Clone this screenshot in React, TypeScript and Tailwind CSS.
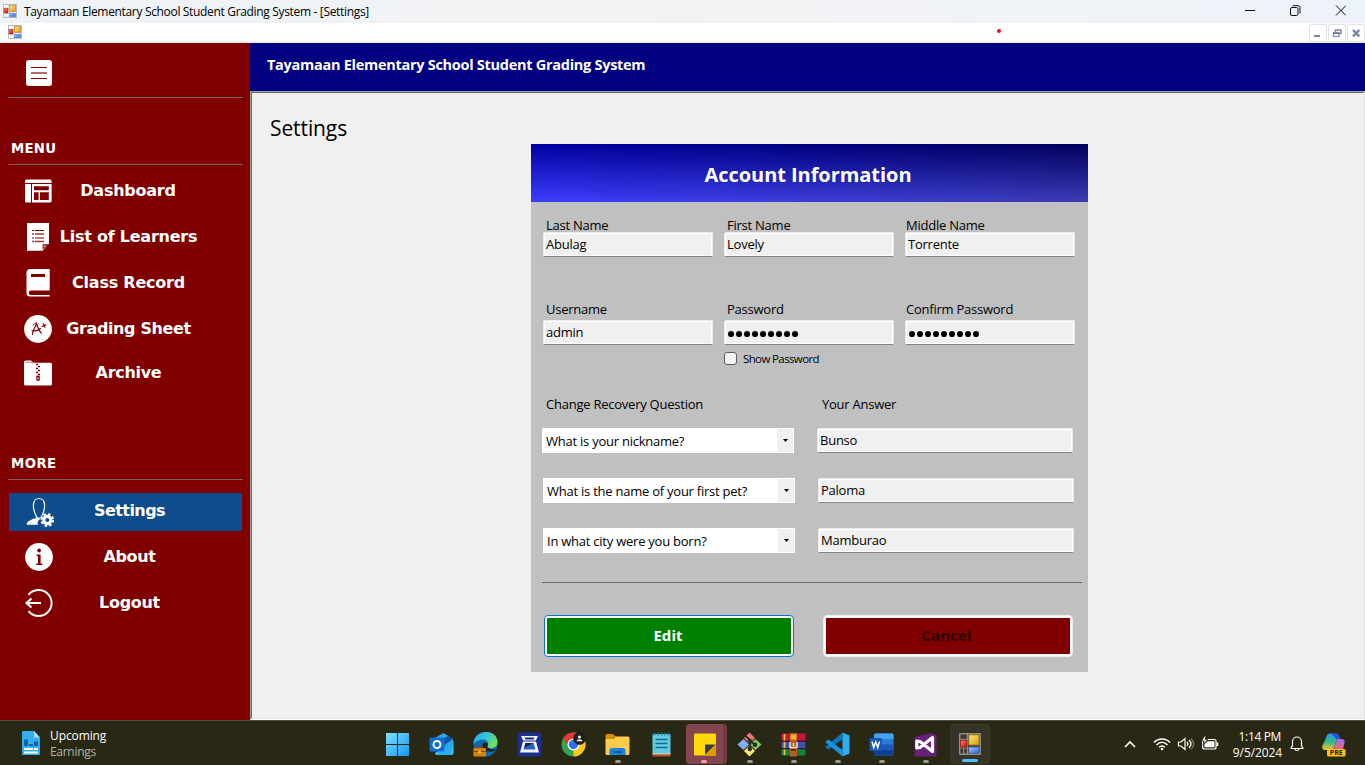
import React from "react";

const SANS = "font-['Open_Sans','Noto_Sans',sans-serif]";
const WIDE = "font-['DejaVu_Sans',sans-serif]";

function FormsIcon({ size = 14, dark = false }: { size?: number; dark?: boolean }) {
  return (
    <svg width={size} height={size} viewBox="0 0 14 14" className="block shrink-0">
      <defs>
        <linearGradient id="fy" x1="0" y1="0" x2="1" y2="1">
          <stop offset="0" stopColor="#ffe98a" />
          <stop offset="1" stopColor="#d99a00" />
        </linearGradient>
        <linearGradient id="fb" x1="0" y1="0" x2="1" y2="1">
          <stop offset="0" stopColor="#a9c8ff" />
          <stop offset="1" stopColor="#2f62cf" />
        </linearGradient>
        <linearGradient id="fr" x1="0" y1="0" x2="1" y2="1">
          <stop offset="0" stopColor="#ff8a7a" />
          <stop offset="1" stopColor="#b80c0c" />
        </linearGradient>
      </defs>
      <rect x="0.5" y="0.5" width="13" height="13" fill={dark ? "#3a3a30" : "#fff"} stroke={dark ? "#aaa69c" : "#b9b9b9"} strokeWidth={dark ? 0.7 : 1} />
      <path d="M5.3 0V14M0 9.5H5.3M3 9.5V14M0 4H5.3" stroke={dark ? "#aaa69c" : "#c4c4c4"} strokeWidth="0.6" />
      <rect x="6.300" y="1.2" width="6.4" height="6.4" fill="url(#fy)" stroke="#b58a1c" strokeWidth="0.6" />
      <rect x="1" y="4.6" width="4" height="4.4" fill="url(#fr)" stroke="#9d1c12" strokeWidth="0.5" />
      <rect x="6.300" y="9" width="6.4" height="3.8" fill="url(#fb)" stroke="#4d74c4" strokeWidth="0.4" />
    </svg>
  );
}

function TitleBar() {
  return (
    <div className="flex h-[23px] items-start bg-linear-to-r from-[#eef3f7] via-[#f2f2f3] to-[#edf3fa] pl-[3px]">
      <div className="pt-1">
        <FormsIcon />
      </div>
      <span className="ml-[7px] pt-[2px] text-[12px] leading-[20px] tracking-[-0.33px] text-black">
        Tayamaan Elementary School Student Grading System - [Settings]
      </span>
      <svg className="mt-[5px] mr-[19px] ml-auto block" width="101" height="11" viewBox="0 0 101 11" fill="none" stroke="#111" strokeWidth="1">
        <path d="M0 5.5H10" />
        <rect x="45.5" y="2.5" width="7.5" height="8" rx="1.5" />
        <path d="M47.5 0.7H53a2 2 0 0 1 2 2V8.5" />
        <path d="M91 0.5L101 10.5M101 0.5L91 10.5" />
      </svg>
    </div>
  );
}

function MdiButton({ children }: { children: React.ReactNode }) {
  return (
    <div className="flex h-[18px] w-[18px] items-center justify-center rounded-[2px] border border-[#e2e2e2] bg-white">
      <svg width="10" height="10" viewBox="0 0 10 10" fill="none" stroke="#76889b" className="block">
        {children}
      </svg>
    </div>
  );
}

function MenuBar() {
  return (
    <div className="flex h-5 items-start border-b-2 border-[#f0f0f0] bg-white pl-2">
      <div className="pt-[2px]">
        <FormsIcon />
      </div>
      <span className="mt-[6px] ml-[975px] h-1 w-1 rounded-full bg-[#ee1111]" />
      <div className="mt-px ml-auto flex gap-px">
        <MdiButton>
          <path d="M1 8H7" strokeWidth="2" />
        </MdiButton>
        <MdiButton>
          <path d="M3 2H9.500M9 2V6M3.500 2V4M7 5.500H9.500" strokeWidth="1.400" />
          <path d="M1 5H7.500" strokeWidth="2" />
          <path d="M1.500 5V8.500H7V5" strokeWidth="1.200" />
        </MdiButton>
        <MdiButton>
          <path d="M2 2L8.400 8.400M8.400 2L2 8.400" strokeWidth="2.400" />
        </MdiButton>
      </div>
    </div>
  );
}

const NAV_ICONS: Record<string, React.ReactNode> = {
  dashboard: (
    <>
      <path d="M1 6V5a1.600 1.600 0 0 1 1.600-1.600H26A1.600 1.600 0 0 1 27.600 5V7H1z" fill="#fff" />
      <path d="M1 8H7V26.500H2.600A1.600 1.600 0 0 1 1 24.900z" fill="#fff" />
      <path fillRule="evenodd" d="M8 8H27.600V24.900A1.600 1.600 0 0 1 26 26.500H8zM10 10.300V14.200H24.800V10.300zM10 16.300V24H14.600V16.300zM16 16.300V24H24.800V16.300z" fill="#fff" />
    </>
  ),
  learners: (
    <>
      <path d="M3 1H25V21.500L18.500 28.700H3z" fill="#fff" />
      <path d="M18.600 27.500V22.300H24.500z" fill="#800000" />
      <path d="M19.600 25.500V23.400H22z" fill="#fff" />
      <path d="M8 8.500H10M11 8.500H20M8 16H10M11 16H20" stroke="#800000" strokeWidth="1.100" />
      <path d="M8 12H10M11 12H20M8 19.500H10M11 19.500H20" stroke="#9c3a3a" strokeWidth="1.400" />
    </>
  ),
  record: (
    <>
      <path d="M6.500 1H25.700V22.600H7A2 2 0 0 0 7 27H25.700V28.500H6A3.500 3.500 0 0 1 2.500 25V5A4 4 0 0 1 6.500 1z" fill="#fff" />
      <rect x="7" y="6" width="14" height="3" fill="#800000" />
    </>
  ),
  grading: (
    <>
      <circle cx="14" cy="15" r="13.900" fill="#fff" />
      <path d="M8.500 20.500C8 18 11.500 12.500 12.500 9.500C13.500 12.500 15 17 17.300 19M8 16.500C10.500 17.300 14 16.500 16.500 14.500M18 12.500L22 10.800M19.300 9.700L21 13.200" fill="none" stroke="#800000" strokeWidth="1.200" strokeLinecap="round" />
      <path d="M9 11.500C9.500 9.700 11 9 12.700 9.500" fill="none" stroke="#800000" strokeWidth="1" />
    </>
  ),
  archive: (
    <>
      <path d="M0 4A1.600 1.600 0 0 1 1.600 2.400H7L9 4.700H26.400A1.600 1.600 0 0 1 28 6.300V26A1.600 1.600 0 0 1 26.400 27.600H1.600A1.600 1.600 0 0 1 0 26z" fill="#fff" />
      <path d="M1.500 4.300H7L8.500 5.400" stroke="#a85454" strokeWidth="0.800" fill="none" />
      <path d="M12 6.500H14M14 8.500H16M12 10.500H14M14 12.500H16M12 14.500H14M14 16.500H16" stroke="#800000" strokeWidth="1.500" />
      <rect x="12.300" y="17.500" width="3.500" height="5.300" rx="1.400" fill="#800000" />
      <path d="M13.200 20.300H15" stroke="#fff" strokeWidth="1" />
    </>
  ),
  settings: (
    <>
      <path d="M12.500 20C10.500 16 9 12 9.500 7.500C10 -0.500 20 -0.500 20.500 7.500C20.900 12 19.500 16 17.500 20" fill="none" stroke="#fff" strokeWidth="1.200" />
      <path d="M2.800 27.700C2.800 24.800 4.500 24.300 7 23C9.500 21.200 10.500 21.600 12 21.200L12.300 19L15 21L17.300 19L16 22C13.800 23.500 13 25.500 14 27.700z" fill="#fff" />
      <circle cx="23.300" cy="23" r="3.600" fill="none" stroke="#fff" strokeWidth="3.200" />
      <circle cx="23.300" cy="23" r="5.900" fill="none" stroke="#fff" strokeWidth="2" strokeDasharray="2.500 2.134" />
    </>
  ),
  about: (
    <>
      <circle cx="15" cy="15" r="13.900" fill="#fff" />
      <circle cx="15.100" cy="8.500" r="1.900" fill="#800000" />
      <path d="M12.500 12.500H16.600V21.500H18.300V22.900H12.300V21.500H14V13.900H12.500z" fill="#800000" />
    </>
  ),
  logout: (
    <>
      <path d="M4.500 6.800A13 13 0 1 1 4.500 23.200" fill="none" stroke="#fff" strokeWidth="2" />
      <path d="M2.500 15H17M7.500 10.500L2.500 15L7.500 19.500" fill="none" stroke="#fff" strokeWidth="2.200" />
    </>
  ),
};

function NavItem({ icon, label, active = false, className = "", text = "pb-px pl-[5px] tracking-[-0.24px]" }: { icon: string; label: string; active?: boolean; className?: string; text?: string }) {
  return (
    <button className={`ml-[9px] grid h-[38px] w-[233px] shrink-0 grid-cols-[15px_30px_1fr] items-center ${active ? "bg-[#0f4c8c]" : ""} ${className}`}>
      <svg width="30" height="30" viewBox="0 0 30 30" className="col-start-2 row-start-1 block">
        {NAV_ICONS[icon]}
      </svg>
      <span className={`col-span-3 col-start-1 row-start-1 text-center text-[16px] leading-5 font-bold whitespace-nowrap text-white ${text} ${WIDE}`}>{label}</span>
    </button>
  );
}

function SideLine() {
  return <div className="ml-2 h-px w-[235px] shrink-0 bg-[#7a6262]" />;
}

function Sidebar() {
  const heading = `pl-[11px] text-[13.3px] leading-5 font-bold tracking-[0.25px] text-white ${WIDE}`;
  return (
    <aside className="flex w-[250px] shrink-0 flex-col bg-[#800000] pt-[17px]">
      <svg width="26" height="26" viewBox="0 0 26 26" className="mb-[11px] ml-[26px] block shrink-0">
        <rect width="26" height="26" rx="3" fill="#fff" />
        <path d="M5 7.500H21M5 18.500H21" stroke="#800000" />
        <path d="M5 13H21" stroke="#b86a6a" strokeWidth="2" />
      </svg>
      <SideLine />
      <h2 className={`mt-[41px] mb-[5px] ${heading}`}>MENU</h2>
      <SideLine />
      <NavItem className="mt-[7px]" icon="dashboard" label="Dashboard" />
      <NavItem className="mt-2" icon="learners" label="List of Learners" text="pb-px pl-[6px] tracking-[-0.24px]" />
      <NavItem className="mt-2" icon="record" label="Class Record" text="pb-px pl-[6px] tracking-[-0.24px]" />
      <NavItem className="mt-2" icon="grading" label="Grading Sheet" text="pb-px pl-[6px] tracking-[-0.38px]" />
      <NavItem className="mt-[6px]" icon="archive" label="Archive" text="pb-px pl-[6px] tracking-[-0.3px]" />
      <h2 className={`mt-[62px] mb-[5px] ${heading} tracking-[0.45px]`}>MORE</h2>
      <SideLine />
      <NavItem className="mt-[13px]" icon="settings" label="Settings" active text="pb-[3px] pl-2 tracking-[-0.55px]" />
      <NavItem className="mt-[7px]" icon="about" label="About" text="pb-px pl-2 tracking-[-0.4px]" />
      <NavItem className="mt-2" icon="logout" label="Logout" text="pb-px pl-2 tracking-[-0.3px]" />
    </aside>
  );
}

const LABEL = "block text-[13px] leading-[14px] tracking-[-0.24px] text-black";

function Box({ children, className = "" }: { children: React.ReactNode; className?: string }) {
  return (
    <div className={`h-[25px] rounded-[2px] border border-[#ebebeb] border-b-[#858585] ${className}`}>
      <div className="h-[23px] border border-white bg-[#f0f0f0] pl-px text-[13px] leading-[21px] tracking-[-0.24px] text-black">{children}</div>
    </div>
  );
}

function Dots() {
  return (
    <svg width="73" height="21" viewBox="0 0 73 21" className="block">
      {Array.from({ length: 9 }, (_, i) => (
        <ellipse key={i} cx={4 + i * 8} cy="12" rx="3" ry="3.100" fill="#000" />
      ))}
    </svg>
  );
}

function Field({ label, pad = "pl-[3px]", tall = false, children }: { label: string; pad?: string; tall?: boolean; children: React.ReactNode }) {
  return (
    <label className="block w-[170px]">
      <span className={`${LABEL} ${pad} ${tall ? "mb-1" : ""}`}>{label}</span>
      <Box>{children}</Box>
    </label>
  );
}

function Combo({ children }: { children: React.ReactNode }) {
  return (
    <div className="flex h-[25px] w-[252px] justify-between bg-white p-px pl-1 text-[13px] tracking-[-0.24px] text-black">
      <span className="leading-[25px]">{children}</span>
      <span className="flex w-4 items-center justify-center bg-[#f0f0f0]">
        <svg width="5" height="3" viewBox="0 0 5 3" className="block">
          <path d="M0 0H5L2.500 3z" fill="#000" />
        </svg>
      </span>
    </div>
  );
}

function Account() {
  return (
    <section className="mt-[2px] ml-[279px] h-[528px] w-[557px] bg-[#c0c0c0]">
      <div className="grid h-[58px] bg-linear-to-r from-[#3d3dff] to-[#3c3cb6]">
        <div className="col-start-1 row-start-1 bg-linear-to-r from-[#0000a0] to-[#00005c] [mask-image:linear-gradient(to_bottom,black,transparent)]" />
        <h2 className="z-10 col-start-1 row-start-1 pt-[17px] pr-[3px] text-center text-[20px] leading-7 font-bold tracking-[-0.05px] text-white">Account Information</h2>
      </div>
      <div className="px-3">
        <div className="flex gap-[11px] pt-4">
          <Field label="Last Name">Abulag</Field>
          <Field label="First Name">Lovely</Field>
          <Field label="Middle Name" pad="pl-px">Torrente</Field>
        </div>
        <div className="flex gap-[11px] pt-[45px]">
          <Field label="Username" tall>admin</Field>
          <Field label="Password" tall><Dots /></Field>
          <Field label="Confirm Password" pad="pl-px" tall><Dots /></Field>
        </div>
        <div className="flex h-[52px] items-start pt-[7px] pl-[181px]">
          <span className="h-[13px] w-[13px] rounded-[3px] border border-[#5f5f5f] bg-[#f3f3f3]" />
          <span className="ml-[6px] text-[11.5px] leading-[14px] tracking-[-0.62px] text-black">Show Password</span>
        </div>
        <div className="flex pl-[3px]">
          <span className={`w-[276px] ${LABEL}`}>Change Recovery Question</span>
          <span className={LABEL}>Your Answer</span>
        </div>
        <div className="mt-[17px] -ml-px flex gap-[23px]">
          <Combo>What is your nickname?</Combo>
          <Box className="w-[256px]">Bunso</Box>
        </div>
        <div className="mt-[25px] flex gap-[23px]">
          <Combo>What is the name of your first pet?</Combo>
          <Box className="w-[256px]">Paloma</Box>
        </div>
        <div className="mt-[25px] flex gap-[23px]">
          <Combo>In what city were you born?</Combo>
          <Box className="w-[256px]">Mamburao</Box>
        </div>
        <div className="mt-[29px] -ml-px h-px w-[540px] bg-[#696969]" />
        <div className="mt-8 ml-px flex gap-[29px] text-[15px] font-bold tracking-[0.05px]">
          <button className="h-[42px] w-[250px] rounded-[4px] border border-[#0a72cc] bg-white p-[2px]">
            <span className="block h-[36px] bg-[#008000] pr-[2px] leading-[35px] text-white">Edit</span>
          </button>
          <button className="h-[42px] w-[250px] rounded-[4px] border border-[#ececec] bg-[#fdfdfd] p-[2px]">
            <span className="block h-[36px] bg-[#800000] pr-[3px] leading-[35px] tracking-[0.15px] text-[#2b0000]">Cancel</span>
          </button>
        </div>
      </div>
    </section>
  );
}

function AppArea() {
  return (
    <div className="flex min-w-0 flex-1 flex-col">
      <header className="h-12 bg-[#000080] pt-3 pl-[17px] text-[14.5px] leading-5 font-bold tracking-[-0.28px] text-white">
        Tayamaan Elementary School Student Grading System
      </header>
      <div className="flex-1 border border-t-[#a0a0a0] border-r-[#e3e3e3] border-b-white border-l-[#a0a0a0]">
        <main className="h-full border-t border-b border-l border-t-[#696969] border-b-[#e3e3e3] border-l-[#696969] bg-[#f0f0f0] pt-[21px]">
          <h1 className="pl-[18px] text-[21px] leading-7 tracking-[-0.1px] text-black">Settings</h1>
          <Account />
        </main>
      </div>
    </div>
  );
}

const APPS: { name: string; run?: boolean; art: React.ReactNode }[] = [
  {
    name: "Start",
    art: (
      <>
        <defs>
          <linearGradient id="win" x1="0" y1="0" x2="1" y2="1" gradientUnits="objectBoundingBox">
            <stop offset="0" stopColor="#7fe0ff" />
            <stop offset="1" stopColor="#1496ee" />
          </linearGradient>
        </defs>
        <path d="M1 1H12V12H1zM13 1H24V12H13zM1 13H12V24H1zM13 13H24V24H13z" fill="url(#win)" />
      </>
    ),
  },
  {
    name: "Outlook",
    art: (
      <>
        <path d="M4 7L14.500 1L24 7V10L14 16L4 11z" fill="#32a9e8" />
        <path d="M10 9L19 4L24 7L14 14z" fill="#124fa8" />
        <path d="M24.500 9V21a2 2 0 0 1-2 2H8a2 2 0 0 1-2-2L19 13z" fill="#3cc8f5" />
        <path d="M24.500 9L8 18L10 23H22z" fill="#1c9be8" opacity="0.600" />
        <rect x="0.500" y="5.500" width="15" height="14" rx="1.500" fill="#0f6fce" />
        <circle cx="8" cy="12.500" r="3.500" fill="none" stroke="#fff" strokeWidth="1.900" />
      </>
    ),
  },
  {
    name: "Edge",
    art: (
      <>
        <defs>
          <linearGradient id="edge" x1="0" y1="0" x2="1" y2="0.500">
            <stop offset="0" stopColor="#24a8e8" />
            <stop offset="0.500" stopColor="#2fc2df" />
            <stop offset="1" stopColor="#73e05a" />
          </linearGradient>
        </defs>
        <circle cx="12.500" cy="12.500" r="12" fill="#1268b4" />
        <path d="M0.500 12C1 -4 24.500 -3.500 24.500 10C24.500 16 18 17.500 14 15C16.500 12 15 7.500 10 7.500C5 7.500 2 10 0.500 12z" fill="url(#edge)" />
        <path d="M9 15C9 10.500 13 9.500 14.500 11.500C15.500 13 13.500 14.500 15 16C18 18.500 22 17.500 24.500 16.500C22 20 17 20.500 13 19z" fill="#22241c" />
        <rect x="0.500" y="16" width="12.500" height="8.500" rx="1" fill="#d9820f" />
        <path d="M4 16.500V14.800H9.500V16.500M0.500 19.500H13" stroke="#8a4608" fill="none" />
        <rect x="5.700" y="18.500" width="2" height="2.500" fill="#ffd45a" />
      </>
    ),
  },
  {
    name: "Scanner",
    art: (
      <>
        <rect x="0.500" y="0.500" width="24" height="24" rx="3" fill="#1c2f8f" />
        <path d="M4 4H21L18.800 8.500H6.200z" fill="#f4f6ff" />
        <path d="M7.500 5.500H17.500L16.500 7.500H8.500z" fill="#1d2a7c" />
        <path d="M6 9.500H19L22 20.500H3z" fill="#f4f6ff" />
        <path d="M8.500 11H16.500L18.500 17.500H6.500z" fill="#2864c8" />
        <path d="M8.500 11H16.500L7 16z" fill="#17225f" />
      </>
    ),
  },
  {
    name: "Chrome",
    art: (
      <>
        <circle cx="12.500" cy="12.500" r="12" fill="#34a450" />
        <path d="M12.500 12.500L22.900 6.500A12 12 0 0 1 12.500 24.500z" fill="#fbc719" />
        <path d="M2.100 6.500A12 12 0 0 1 22.900 6.500H12.500L7.500 14z" fill="#e23a2e" />
        <circle cx="12.500" cy="12.500" r="6" fill="#fff" />
        <circle cx="12.500" cy="12.500" r="4.700" fill="#2f6df0" />
        <circle cx="18.500" cy="6.500" r="6.300" fill="#1e1e1e" />
        <circle cx="18.500" cy="5" r="1.600" fill="#eee" />
        <path d="M15.500 9.300C15.500 6.500 21.500 6.500 21.500 9.300z" fill="#eee" />
      </>
    ),
  },
  {
    name: "Explorer",
    run: true,
    art: (
      <>
        <path d="M0.500 3.500A1.500 1.500 0 0 1 2 2H8L11 5H9L8 7H0.500z" fill="#d98c00" />
        <path d="M0.500 7H8L10.500 4.500H23A1.500 1.500 0 0 1 24.500 6V21.500A1.500 1.500 0 0 1 23 23H2A1.500 1.500 0 0 1 0.500 21.500z" fill="#fdcb4d" />
        <path d="M4.500 23V18.500A2.500 2.500 0 0 1 7 16H18A2.500 2.500 0 0 1 20.500 18.500V23z" fill="#1784d8" />
        <path d="M8 20H17" stroke="#0b4f96" strokeWidth="1.500" />
      </>
    ),
  },
  {
    name: "Notepad",
    art: (
      <>
        <rect x="3.500" y="20" width="18" height="4.500" rx="1" fill="#b5501f" />
        <path d="M3.500 21.700H21.500" stroke="#f0e6dc" strokeWidth="1.200" />
        <rect x="3.500" y="2" width="18" height="19.500" rx="1" fill="#62cbe4" />
        <path d="M6.500 7.500H18.500M6.500 11.500H18.500M6.500 15.500H18.500" stroke="#0f6c8f" strokeWidth="1.500" />
        <path d="M5.500 0.500V3.500M9 0.500V3.500M12.500 0.500V3.500M16 0.500V3.500M19.500 0.500V3.500" stroke="#187a9a" strokeWidth="1.300" />
      </>
    ),
  },
  {
    name: "Sticky Notes",
    run: true,
    art: (
      <>
        <rect x="2" y="1.500" width="22" height="22" rx="1" fill="#ffd90a" />
        <path d="M13 23.500L24 12.500V22.500a1 1 0 0 1-1 1z" fill="#d99f00" />
        <path d="M13 23V12.500H23.500z" fill="#3b3a35" />
      </>
    ),
  },
  {
    name: "Git",
    run: true,
    art: (
      <>
        <path d="M12.500 0.500L18 6L12.500 11.500L7 6z" fill="#f4727a" />
        <path d="M6.500 7L12 12.500L6.500 18L0.500 12.500z" fill="#7fb2fb" />
        <path d="M18.500 7L24.500 12.500L18.500 18L13 12.500z" fill="#79cf5e" />
        <path d="M12.500 13.500L18 19L12.500 24.500L7 19z" fill="#ffe37a" />
        <path d="M8 3.500L13 8V17.500M13 9L18 13" stroke="#2c2b1c" strokeWidth="1.700" fill="none" />
        <circle cx="12.800" cy="8.500" r="2" fill="#2c2b1c" />
        <circle cx="12.800" cy="17" r="2.200" fill="#2c2b1c" />
        <circle cx="18" cy="12.700" r="2.200" fill="#2c2b1c" />
      </>
    ),
  },
  {
    name: "WinRAR",
    run: true,
    art: (
      <>
        <rect x="0.500" y="1.500" width="24" height="7.500" rx="1" fill="#c4163c" />
        <rect x="0.500" y="9.500" width="24" height="7" rx="1" fill="#4a4db0" />
        <rect x="0.500" y="17" width="24" height="6.500" rx="1" fill="#12813a" />
        <path d="M0.500 9.200H24.500M0.500 16.700H24.500" stroke="#2b1520" />
        <path d="M3.500 2V8.500M3.500 10V16M3.500 17.500V23" stroke="#f2c32d" strokeWidth="1.700" />
        <rect x="9" y="1" width="7" height="23.500" fill="#b55c22" />
        <rect x="9.500" y="2.500" width="6" height="5" fill="#f2b32c" />
        <path d="M9 10V15.500H16V10M12.500 11V14" fill="none" stroke="#efe7de" strokeWidth="1.400" />
        <rect x="10" y="17" width="5" height="2" fill="#6b2d0e" />
      </>
    ),
  },
  {
    name: "VS Code",
    run: true,
    art: (
      <>
        <path d="M17.500 0.500V7L3.500 17.500L0.700 15.500C0.400 15.200 0.400 14.700 0.700 14.400z" fill="#0b74bc" />
        <path d="M17.500 24.500V18L3.500 7.500L0.700 9.500C0.400 9.800 0.400 10.300 0.700 10.600z" fill="#1a93dd" />
        <path d="M17.500 0.500L24.500 3.500V21.500L17.500 24.500z" fill="#2fadf3" />
      </>
    ),
  },
  {
    name: "Word",
    run: true,
    art: (
      <>
        <rect x="5" y="1.500" width="19.500" height="22" rx="1.500" fill="#2b7cd3" />
        <path d="M5 3a1.500 1.500 0 0 1 1.500-1.500H23A1.500 1.500 0 0 1 24.500 3V7H5z" fill="#41a5ee" />
        <rect x="5" y="12.500" width="19.500" height="5.500" fill="#185abd" />
        <path d="M5 18H24.500V22A1.500 1.500 0 0 1 23 23.500H6.500A1.500 1.500 0 0 1 5 22z" fill="#103f91" />
        <rect x="0.500" y="6" width="12.500" height="13" rx="1.200" fill="#1857b8" />
        <path d="M3 9.500L4.700 15.500L6.700 10L8.700 15.500L10.500 9.500" stroke="#fff" strokeWidth="1.500" fill="none" />
      </>
    ),
  },
  {
    name: "Visual Studio",
    run: true,
    art: (
      <>
        <path d="M1.500 5L18 1L23.500 3V24.500H1.500z" fill="#68217a" />
        <path d="M3.800 9V16L7 15.500L19.500 5.500V19.500L7 9.500z" fill="none" stroke="#fff" strokeWidth="3.200" strokeLinejoin="round" />
      </>
    ),
  },
  { name: "Grading System", run: true, art: null },
];

function Taskbar() {
  return (
    <footer className="flex h-[45px] shrink-0 border-t border-[#4b4a3c] bg-[#292815] text-white">
      <div className="flex w-[375px] pl-[22px]">
        <svg width="18" height="24" viewBox="0 0 18 24" className="mt-[10px] block">
          <path d="M1 0H12L18 6.500V23a1 1 0 0 1-1 1H1a1 1 0 0 1-1-1V1a1 1 0 0 1 1-1z" fill="#35aeee" />
          <path d="M12 0L18 6.500H12z" fill="#a9e2fb" />
          <path d="M2 15V8.500H6V15zM7 15V13H11V15zM12 15V10.500H16V15z" fill="#1261ad" />
          <path d="M2 18H11M12 18H16M2 21.500H16" stroke="#fff" strokeWidth="1.800" />
        </svg>
        <div className="pt-[7px] pl-[10px] text-[12px] leading-4">
          <div className="tracking-[-0.1px]">Upcoming</div>
          <div className="tracking-[-0.3px] text-[#b4b3aa]">Earnings</div>
        </div>
      </div>
      <div className="flex">
        {APPS.map((app) => {
          const sticky = app.name === "Sticky Notes";
          const current = app.name === "Grading System";
          return (
            <div key={app.name} title={app.name} className="flex h-11 w-11 justify-center">
              <div
                className={`flex h-10 flex-col items-center justify-between pt-2 pb-px ${
                  sticky ? "mt-[3px] ml-[2px] w-[41px] rounded-[4px] border-r-[4px] border-[#703b43] bg-[#84454e]" : current ? "mt-[3px] ml-[2px] w-10 rounded-[4px] border border-[#3b3a2d] bg-[#353427] pt-[7px] pb-0" : "mt-[3px] ml-[1px] w-10"
                }`}
              >
                {current ? (
                  <div className="pt-px">
                    <FormsIcon size={22} dark />
                  </div>
                ) : (
                  <svg width="25" height="25" viewBox="0 0 25 25" className="block shrink-0">
                    {app.art}
                  </svg>
                )}
                {app.run && <span className={`h-[3px] rounded-full ${sticky ? "w-[6px] bg-[#ff9aa8]" : current ? "w-4 bg-[#4cc2ff]" : "w-[6px] bg-[#9a998f]"}`} />}
              </div>
            </div>
          );
        })}
      </div>
      <div className="ml-auto flex items-start">
        <svg width="100" height="24" viewBox="0 0 100 24" className="mt-[11px] block" fill="none" stroke="#fff" strokeWidth="1.400">
          <path d="M6 15L11 10L16 15" strokeWidth="1.600" />
          <path d="M35 10.500C39.500 5.800 46.500 5.800 51 10.500M37.500 13C41 9.600 45 9.600 48.500 13M40 15.300C42 13.500 44 13.500 46 15.300" strokeWidth="1.500" />
          <circle cx="43" cy="17" r="1.300" fill="#fff" stroke="none" />
          <path d="M59.500 10H62L66 6.500V17.500L62 14H59.500z" strokeWidth="1.200" />
          <path d="M68 10C69.200 11.300 69.200 12.700 68 14M70 8C72.500 10.500 72.500 13.500 70 16" strokeWidth="1.200" />
          <path d="M72 6.500C75.500 10 75.500 14 72 17.500" stroke="#77766b" strokeWidth="1.200" />
          <rect x="83.600" y="7.500" width="13.500" height="9.500" rx="2" strokeWidth="1.200" />
          <path d="M88 9.300H95.500V15.300H85.500V12.500z" fill="#fff" stroke="none" />
          <path d="M98.500 10.500V14" strokeWidth="1.500" />
          <path d="M85.500 4L82.500 9H85L84 13L88.500 7.500H86L87 4z" fill="#fff" stroke="#292815" strokeWidth="0.800" />
        </svg>
        <div className="w-[63px] pt-2 text-right text-[12px] leading-4 whitespace-nowrap">
          <div className="pr-px tracking-[-0.35px]">1:14 PM</div>
          <div className="tracking-[-0.1px]">9/5/2024</div>
        </div>
        <svg width="16" height="18" viewBox="0 0 16 18" className="mt-[14px] ml-[7px] block" fill="none" stroke="#fff" strokeWidth="1.200">
          <path d="M3.500 10.500V6.500a4.500 4.500 0 0 1 9 0V10.500L14 13.500H2zM6 14C6.300 16 9.700 16 10 14" strokeLinejoin="round" />
        </svg>
        <svg width="26" height="26" viewBox="0 0 26 26" className="mt-[12px] mr-[18px] ml-[16px] block">
          <defs>
            <linearGradient id="cpa" x1="0" y1="0" x2="0" y2="1">
              <stop offset="0" stopColor="#1fa0f0" />
              <stop offset="0.500" stopColor="#36b78d" />
              <stop offset="1" stopColor="#f3c02c" />
            </linearGradient>
            <linearGradient id="cpb" x1="0" y1="0" x2="0" y2="1">
              <stop offset="0" stopColor="#a66cf0" />
              <stop offset="1" stopColor="#f2617a" />
            </linearGradient>
          </defs>
          <path d="M16 6H20a3 3 0 0 1 3.500 4L21.500 18H12z" fill="url(#cpb)" />
          <path d="M6 2.500A3 3 0 0 1 9 0.500H15A3 3 0 0 1 18 3L19 6H16L12 17H4A3 3 0 0 1 1.300 13z" fill="url(#cpa)" />
          <path d="M9 0.500H15A3 3 0 0 1 18 3L19 6H15L13 3z" fill="#2350d6" />
          <rect x="6" y="16" width="18.500" height="7.500" rx="1.500" fill="#ffc20a" />
          <text x="15.300" y="22.300" textAnchor="middle" fontSize="7" fontWeight="700" fill="#1c1a08" fontFamily="Open Sans">PRE</text>
        </svg>
      </div>
    </footer>
  );
}

export default function App() {
  return (
    <div className={`flex h-[765px] w-[1365px] flex-col overflow-hidden bg-white ${SANS}`}>
      <TitleBar />
      <MenuBar />
      <div className="flex h-[677px] shrink-0">
        <Sidebar />
        <AppArea />
      </div>
      <Taskbar />
    </div>
  );
}
